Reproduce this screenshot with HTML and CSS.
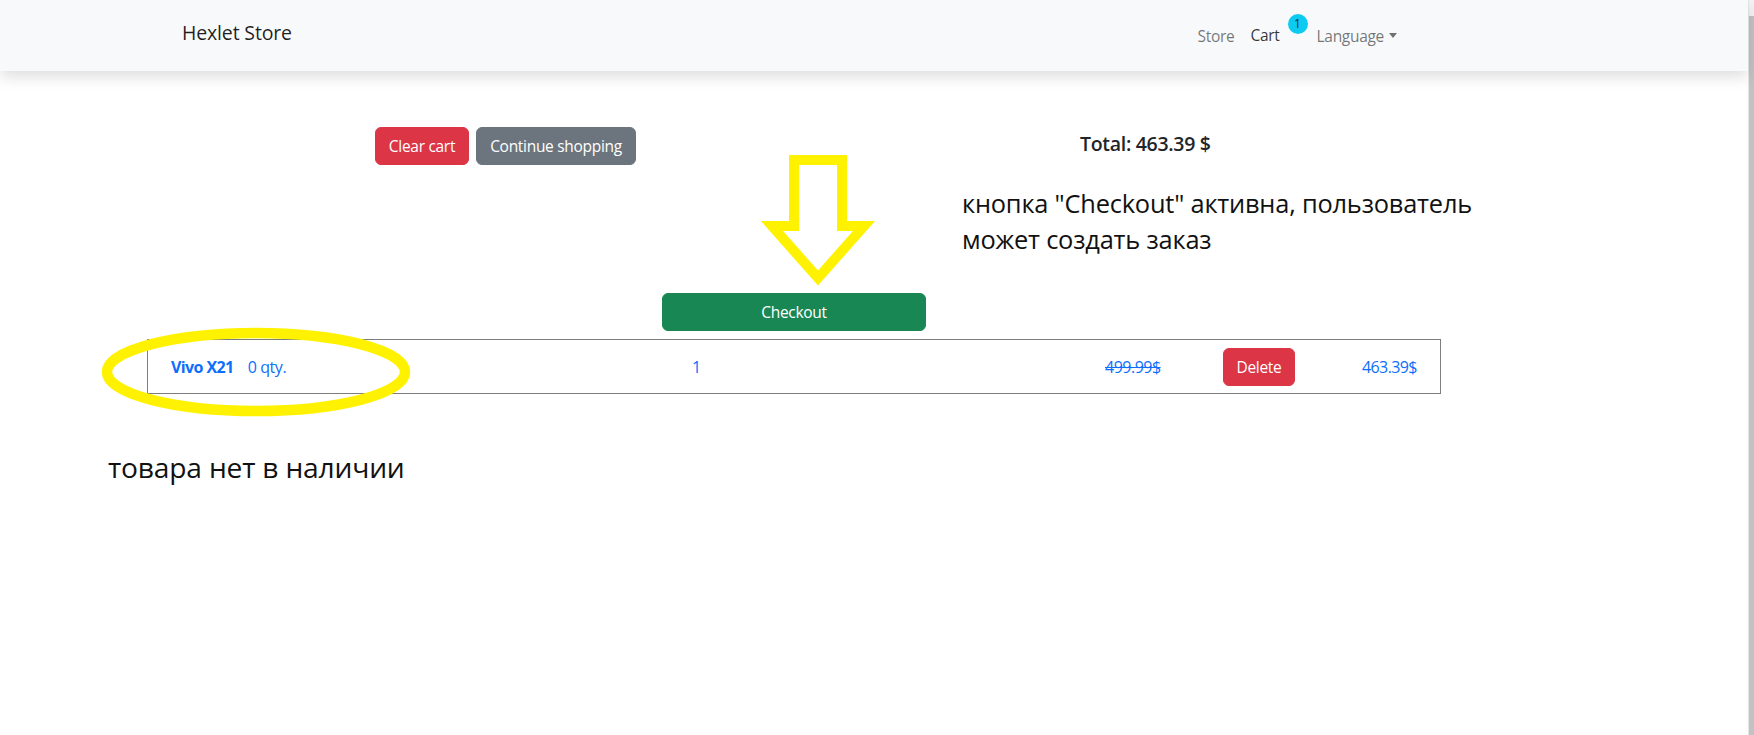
FILE: index.html
```html
<!DOCTYPE html>
<html lang="ru">
<head>
<meta charset="utf-8">
<title>Hexlet Store</title>
<link rel="stylesheet" href="styles.css">
</head>
<body>
<div class="page">
  <main class="main">
    <header class="navbar">
      <div class="navbar-inner">
        <a class="brand" href="#">Hexlet Store</a>
        <ul class="nav">
          <li><a class="nav-link" href="#">Store</a></li>
          <li><a class="nav-link active" href="#">Cart<span class="badge">1</span></a></li>
          <li><a class="nav-link dropdown" href="#">Language<span class="caret"></span></a></li>
        </ul>
      </div>
    </header>

    <section class="toolbar">
      <div class="actions">
        <button class="btn btn-danger">Clear cart</button>
        <button class="btn btn-secondary">Continue shopping</button>
      </div>
      <div class="total">Total: 463.39 $</div>
    </section>

    <section class="note-area">
      <p class="note">кнопка "Checkout" активна, пользователь<br>может создать заказ</p>
    </section>

    <div class="checkout-row">
      <button class="btn btn-success btn-checkout">Checkout</button>
    </div>

    <div class="cart-table">
      <div class="cell cell-name"><a class="product" href="#">Vivo X21</a><span class="stock">0 qty.</span></div>
      <div class="cell cell-qty">1</div>
      <div class="cell cell-price"><s>499.99$</s></div>
      <div class="cell cell-del"><button class="btn btn-danger btn-delete">Delete</button></div>
      <div class="cell cell-sum">463.39$</div>
    </div>

    <p class="note note-bottom">товара нет в наличии</p>

    <svg class="annotations" width="1748" height="735" viewBox="0 0 1748 735" aria-hidden="true">
      <polygon points="794,160 842,160 842,226 864,226 818,278 772,226 794,226" fill="none" stroke="#fff200" stroke-width="10" stroke-linejoin="miter" stroke-miterlimit="10"/>
      <ellipse cx="256" cy="372" rx="149" ry="39" fill="none" stroke="#fff200" stroke-width="10.5"/>
    </svg>
  </main>
  <div class="scrollbar"><div class="scroll-arrow"></div><div class="scroll-thumb"></div></div>
</div>
</body>
</html>
```

FILE: styles.css
```css
* { box-sizing: border-box; }

html, body {
  margin: 0;
  padding: 0;
  height: 100%;
  overflow: hidden;
}

body {
  font-family: "Open Sans", "Noto Sans", "Liberation Sans", sans-serif;
  font-size: 16px;
  color: #212529;
  background: #fff;
}

.page {
  display: flex;
  height: 735px;
}

.main {
  position: relative;
  flex: 1;
  min-width: 0;
}

/* scrollbar strip */
.scrollbar {
  width: 6px;
  display: flex;
  flex-direction: column;
  background: #f0f0f0;
  border-left: 1px solid #e6e6e6;
}
.scroll-arrow {
  height: 16px;
  background: #f3f3f3;
}
.scroll-thumb {
  flex: 1;
  background: #c2c2c2;
}

/* navbar */
.navbar {
  height: 71px;
  background: #f8f9fa;
  box-shadow: 0 6px 14px rgba(0, 0, 0, 0.13);
  display: flex;
  align-items: center;
  position: relative;
  z-index: 1;
}
.navbar-inner {
  margin-left: 182px;
  width: 1223px;
  display: flex;
  align-items: center;
  justify-content: space-between;
}
.brand {
  font-size: 19.5px;
  font-weight: 500;
  color: rgba(0, 0, 0, 0.88);
  text-decoration: none;
  letter-spacing: -0.15px;
  margin-top: -6px;
}
.nav {
  list-style: none;
  margin: 0;
  padding: 0;
  display: flex;
  align-items: center;
}
.nav-link {
  display: block;
  padding: 8px 8px;
  font-size: 15.5px;
  color: rgba(0, 0, 0, 0.55);
  text-decoration: none;
  letter-spacing: -0.3px;
}
.nav-link.active {
  color: rgba(0, 0, 0, 0.8);
}
.badge {
  display: inline-block;
  position: relative;
  top: -13px;
  margin-left: 8px;
  margin-right: -7px;
  width: 20px;
  height: 20px;
  line-height: 20px;
  border-radius: 50%;
  background: #0dcaf0;
  color: #1b2a3a;
  font-size: 12px;
  text-align: center;
  letter-spacing: 0;
}
.caret {
  display: inline-block;
  margin-left: 5px;
  vertical-align: 4px;
  border-top: 5px solid;
  border-left: 4px solid transparent;
  border-right: 4px solid transparent;
}

/* buttons */
.btn {
  font-family: inherit;
  font-size: 15.5px;
  line-height: 24px;
  padding: 6px 12px;
  border: 1px solid transparent;
  border-radius: 6px;
  color: #fff;
  cursor: pointer;
  letter-spacing: -0.3px;
}
.btn-danger { background: #dc3545; border-color: #dc3545; }
.btn-secondary { background: #6c757d; border-color: #6c757d; }
.btn-success { background: #198754; border-color: #198754; }

/* toolbar row */
.toolbar {
  display: flex;
  align-items: center;
  padding: 56px 0 0 375px;
}
.actions {
  display: flex;
  gap: 7px;
  width: 705px;
}
.actions .btn-danger { width: 94px; padding: 6px 0; }
.actions .btn-secondary { width: 160px; padding: 6px 0; }
.total {
  font-size: 19.5px;
  font-weight: 600;
  color: #212529;
  letter-spacing: -0.3px;
  margin-bottom: 5px;
}

/* annotation text */
.note-area {
  height: 128px;
  padding: 20px 0 0 962px;
}
.note {
  margin: 0;
  font-family: "Open Sans", "Noto Sans", sans-serif;
  font-size: 25.4px;
  line-height: 36px;
  color: #111;
  letter-spacing: -0.2px;
  white-space: nowrap;
}

/* checkout */
.checkout-row {
  padding-left: 662px;
}
.btn-checkout {
  width: 264px;
  height: 38px;
  padding: 0;
}

/* cart row */
.cart-table {
  margin: 8px 0 0 147px;
  width: 1294px;
  height: 55px;
  border: 1px solid #7d7d7d;
  display: flex;
  align-items: center;
  color: #0d6efd;
}
.cell { flex: none; }
.cell-name {
  width: 544px;
  padding-left: 23px;
  display: flex;
  gap: 14px;
}
.product {
  color: #0d6efd;
  font-weight: 700;
  text-decoration: none;
  letter-spacing: -0.6px;
}
.stock { letter-spacing: -0.4px; }
.cell-qty { width: 413px; }
.cell-price { width: 118px; letter-spacing: -0.5px; }
.cell-price s { text-decoration-thickness: 1px; }
.cell-del { width: 139px; }
.btn-delete { width: 72px; height: 38px; padding: 0; }
.cell-sum { letter-spacing: -0.6px; }

.note-bottom {
  margin: 54px 0 0 108px;
  font-size: 28.2px;
  line-height: 38px;
}

/* overlay drawn over the screenshot */
.annotations {
  position: absolute;
  top: 0;
  left: 0;
  pointer-events: none;
  z-index: 2;
}
```
